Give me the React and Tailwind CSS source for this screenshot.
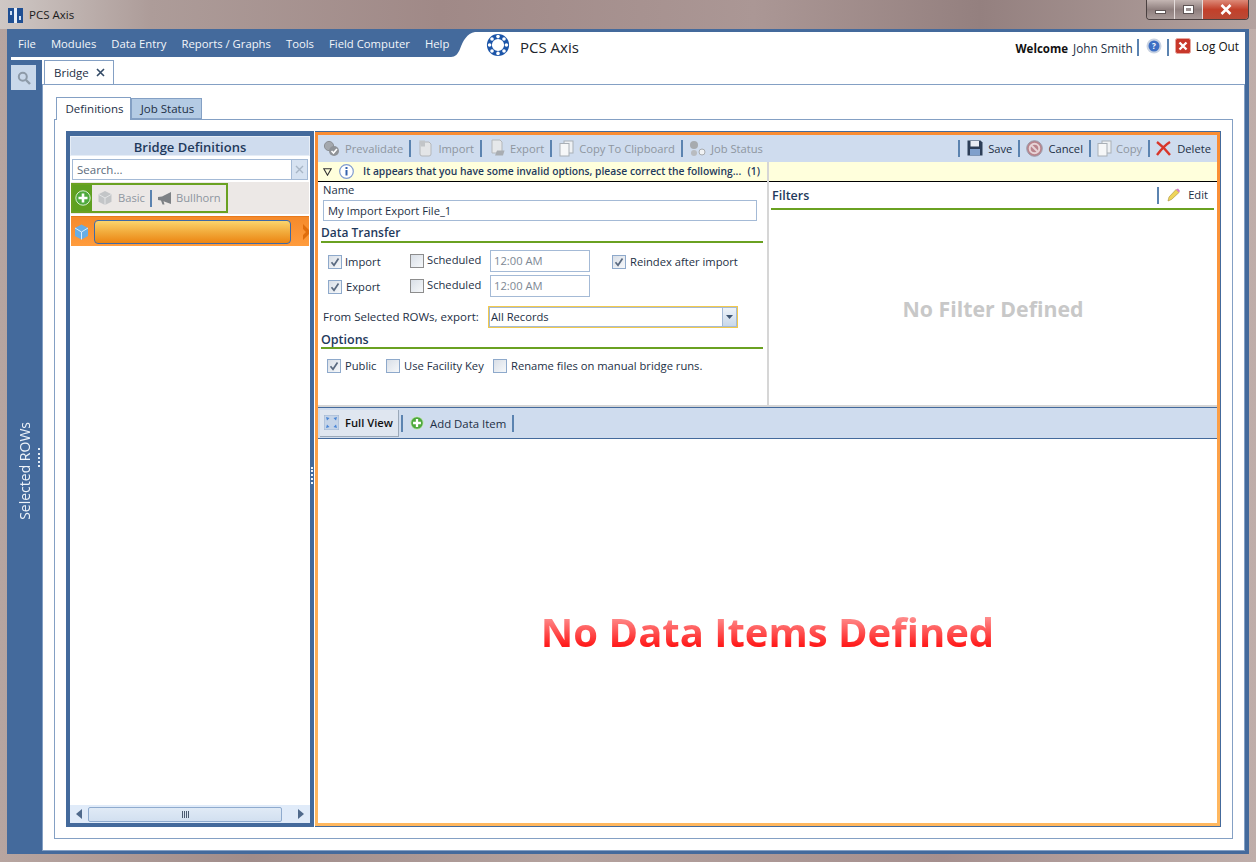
import React from 'react';

const Sep = ({ className = '' }) => <span className={`inline-block w-[2px] h-[17px] bg-[#5b83b0] ${className}`} />;

const CheckBox = ({ checked, gray, className = '' }) => (
  <span className={`inline-flex items-center justify-center w-[14px] h-[14px] shrink-0 border ${gray ? 'border-[#8d8d8d]' : 'border-[#8ea9cb]'} bg-[linear-gradient(135deg,#d9dfe7,#f6f8fa)] ${className}`}>
    {checked && (
      <svg width="10" height="10" viewBox="0 0 10 10">
        <path d="M1.5 5.2 L4 8.3 L8.5 1.5" fill="none" stroke="#5a6a80" strokeWidth="1.7" />
      </svg>
    )}
  </span>
);

const GreenPlus = ({ size = 14 }) => (
  <svg width={size} height={size} viewBox="0 0 16 16">
    <circle cx="8" cy="8" r="7.2" fill="#4eaa3c" stroke="#d6edd0" strokeWidth="1" />
    <path d="M8 3.5v9M3.5 8h9" stroke="#fff" strokeWidth="2.6" />
  </svg>
);

const CopyIcon = () => (
  <svg width="15" height="17" viewBox="0 0 15 17">
    <rect x="5" y="1" width="9" height="12" fill="#eef1f4" stroke="#a9afb6" />
    <rect x="1" y="3.5" width="9" height="12.5" fill="#f6f7f8" stroke="#a9afb6" />
  </svg>
);

const PrevalidateIcon = () => (
  <svg width="17" height="17" viewBox="0 0 17 17">
    <circle cx="6" cy="6" r="4.6" fill="#a4a8ad" stroke="#8b8f94" />
    <circle cx="11" cy="11" r="5" fill="#8f9398" />
    <path d="M8.5 11l2 2 3.4-4" fill="none" stroke="#fff" strokeWidth="1.6" />
  </svg>
);

const ImportIcon = () => (
  <svg width="16" height="18" viewBox="0 0 16 18">
    <path d="M3 3h9l2 2v10a2 2 0 0 1-2 2H5a2 2 0 0 1-2-2z" fill="#e3e5e7" stroke="#b4b7ba" />
    <path d="M2 1.5h6v6H4z" fill="#c2c5c8" />
  </svg>
);

const ExportIcon = () => (
  <svg width="16" height="18" viewBox="0 0 16 18">
    <path d="M3 1h8l2 2v11H3z" fill="#e6e8ea" stroke="#b4b7ba" />
    <path d="M6 16.5l2-5h7.5l-1.5 5z" fill="#a9adb2" />
  </svg>
);

const JobStatusIcon = () => (
  <svg width="17" height="17" viewBox="0 0 17 17">
    <circle cx="5" cy="5" r="4" fill="#a7abaf" />
    <circle cx="5" cy="13" r="3" fill="#b9bcc0" />
    <circle cx="13" cy="12" r="3" fill="#f0f2f4" stroke="#a7abaf" />
  </svg>
);

const Tool = ({ icon, label, disabled, gap = 'gap-[5px]', className = '' }) => (
  <span className={`flex items-center ${gap} ${disabled ? 'text-[#8e969f]' : 'text-[#1d2f45]'} ${className}`}>
    {icon}
    <span className="mt-[2px]">{label}</span>
  </span>
);

const GreenTitle = ({ children, className = '' }) => (
  <div className={`border-b-2 border-[#6aa121] font-semibold text-[#1f3a5c] ${className}`}>{children}</div>
);

export default function App() {
  return (
    <div className="w-[1256px] h-[862px] overflow-hidden flex flex-col font-['Open_Sans',sans-serif] text-[11px] text-[#1d2f45] bg-[linear-gradient(90deg,#b7a5a0,#a08c8a_20%,#b4a29e_45%,#a58f8e_75%,#bfaeaa)]">
      {/* title bar */}
      <div className="h-[29px] shrink-0 flex items-start pl-[8px] relative bg-[linear-gradient(90deg,#cfc8c5,#ad9c99_12%,#a08987_35%,#ab9795_60%,#94807f_78%,#b3a29f)]">
        <svg width="15" height="15" viewBox="0 0 15 15" className="mt-[8px]">
          <rect width="15" height="15" fill="#1f4f93" />
          <rect x="6" y="0" width="3" height="15" fill="#e8eef7" />
          <rect x="2" y="3" width="2" height="4" fill="#cfe0f5" />
          <rect x="11" y="8" width="2" height="4" fill="#cfe0f5" />
        </svg>
        <span className="ml-[6px] mt-[7px] text-[11.5px] leading-[16px] text-[#1b1b1b]">PCS Axis</span>
        <div className="ml-auto mr-[7px] flex h-[20px] border border-t-0 border-[#4a4040] rounded-b-[4px] overflow-hidden w-[103px]">
          <div className="w-[28px] flex items-center justify-center border-r border-[#e4dcdb] bg-[linear-gradient(#c4b6b3,#8f7f7e_50%,#a89a98)]">
            <span className="w-[11px] h-[4px] mt-[5px] bg-white border border-[#5f5555]" />
          </div>
          <div className="w-[27px] flex items-center justify-center bg-[linear-gradient(#c4b6b3,#8f7f7e_50%,#a89a98)]">
            <span className="w-[11px] h-[9px] bg-white border border-[#5f5555] flex items-center justify-center">
              <span className="w-[5px] h-[3px] bg-[#9a9090]" />
            </span>
          </div>
          <div className="flex-1 flex items-center justify-center border-l border-[#e4dcdb] bg-[linear-gradient(#dd8a78,#c2402a_50%,#b94a36)]">
            <svg width="12" height="11" viewBox="0 0 12 11">
              <path d="M1.5 1l9 9M10.5 1l-9 9" stroke="#fff" strokeWidth="2.6" />
            </svg>
          </div>
        </div>
      </div>

      {/* app window */}
      <div className="ml-[7px] w-[1242px] h-[825px] bg-[#446a9c] pt-[3px] pr-[4px] pb-[3px] flex flex-col">
        {/* menu bar */}
        <div className="h-[25px] shrink-0 flex bg-white">
          <div className="w-[444px] bg-[#446a9c] flex items-start pl-[11px] pt-[3px] gap-[15px] text-[11.3px] leading-[17px] text-[#f3f6fa]">
            <span>File</span>
            <span>Modules</span>
            <span>Data Entry</span>
            <span>Reports / Graphs</span>
            <span>Tools</span>
            <span>Field Computer</span>
            <span>Help</span>
          </div>
          <svg width="30" height="25" viewBox="0 0 30 25" className="shrink-0">
            <path d="M0 0H24C16 1 12 9 9 17C7 22 4 25 0 25Z" fill="#446a9c" />
          </svg>
          <svg width="24" height="24" viewBox="0 0 24 24" className="ml-[5px] mt-[1px] shrink-0">
            <circle cx="12" cy="12" r="8.6" fill="none" stroke="#1c55a8" strokeWidth="5" />
            <g fill="#fff">
              <circle cx="12" cy="3.6" r="1.8" />
              <circle cx="12" cy="20.4" r="1.8" />
              <circle cx="3.6" cy="12" r="1.8" />
              <circle cx="20.4" cy="12" r="1.8" />
              <circle cx="6" cy="6" r="1.8" />
              <circle cx="18" cy="6" r="1.8" />
              <circle cx="6" cy="18" r="1.8" />
              <circle cx="18" cy="18" r="1.8" />
            </g>
          </svg>
          <span className="ml-[10px] mt-[5px] text-[15px] leading-[20px] text-[#20242a]">PCS Axis</span>
          <div className="ml-auto flex items-start pr-[6px] pt-[6px] text-[11.8px] leading-[17px] text-[#111]">
            <span className="font-bold text-[11.5px] mt-[2px]">Welcome</span>
            <span className="ml-[5px] mt-[2px] text-[#1d2f45]">John Smith</span>
            <Sep className="ml-[4px] mt-[1px]" />
            <svg width="16" height="16" viewBox="0 0 16 16" className="ml-[7px]">
              <circle cx="8" cy="8" r="7.5" fill="#c9d3e2" />
              <circle cx="8" cy="8" r="5.5" fill="#3d6fc4" />
              <text x="8" y="11" textAnchor="middle" fontSize="8" fontWeight="700" fill="#fff" fontFamily="Open Sans">?</text>
            </svg>
            <Sep className="ml-[5px] mt-[1px]" />
            <svg width="16" height="16" viewBox="0 0 16 16" className="ml-[6px]">
              <rect x="0.5" y="0.5" width="15" height="15" rx="2" fill="#c8372a" stroke="#e7a79f" />
              <path d="M4.5 4.5l7 7M11.5 4.5l-7 7" stroke="#fff" strokeWidth="2.4" />
            </svg>
            <span className="ml-[5px]">Log Out</span>
          </div>
        </div>

        <div className="h-[3px] shrink-0 ml-[4px] bg-white" />

        <div className="flex-1 flex min-h-0">
          {/* selected rows sidebar */}
          <div className="w-[35px] shrink-0 flex flex-col relative">
            <button className="ml-[4px] mt-[5px] w-[25px] h-[25px] bg-[#c9d8ea] flex items-center justify-center">
              <svg width="14" height="14" viewBox="0 0 14 14">
                <circle cx="5.8" cy="5.8" r="4" fill="none" stroke="#8d9aa8" strokeWidth="2" />
                <path d="M9 9l4 4" stroke="#8d9aa8" strokeWidth="2.4" />
              </svg>
            </button>
            <div className="mt-[332px] ml-[11px] [writing-mode:vertical-rl] rotate-180 text-[14px] leading-[14px] text-[#eef3f9]">Selected ROWs</div>
            <div className="absolute left-[31px] top-[388px] h-[19px] w-[2px] border-l-2 border-dotted border-[#e5edf6]" />
          </div>

          {/* content */}
          <div className="flex-1 flex flex-col min-w-0 bg-white">
            <div className="h-[24px] shrink-0 flex pl-[2px]">
              <div className="w-[70px] h-[24px] -mb-px z-10 border border-b-0 border-[#84a0c4] bg-white flex items-center pl-[9px] gap-[7px] text-[11.5px]">
                <span>Bridge</span>
                <svg width="9" height="9" viewBox="0 0 9 9">
                  <path d="M1 1l7 7M8 1l-7 7" stroke="#334a66" strokeWidth="1.6" />
                </svg>
              </div>
            </div>
            <div className="flex-1 min-h-0 border border-[#84a0c4] flex flex-col pt-[11px] pl-[11px] pr-[11px] pb-[11px]">
              <div className="h-[23px] shrink-0 flex items-end pl-[2px] text-[11.5px]">
                <div className="w-[75px] h-[23px] -mb-px z-10 border border-b-0 border-[#84a0c4] bg-white flex items-center justify-center pl-[2px]">Definitions</div>
                <div className="w-[71px] h-[21px] border border-[#84a0c4] bg-[#b4cbe4] flex items-center justify-center pl-[2px]">Job Status</div>
              </div>
              <div className="flex-1 min-h-0 border border-[#84a0c4] flex pt-[11px] pl-[11px] pr-[11px] pb-[11px] gap-[1px]">
                {/* definitions list */}
                <div className="w-[248px] shrink-0 bg-[#446a9c] pt-[5px] px-[4px] pb-[4px] relative">
                  <div className="h-full bg-white flex flex-col">
                    <div className="h-[20px] shrink-0 pt-[3px] bg-[#cfdcee] border border-[#e6edf6] flex items-center justify-center font-semibold text-[13px] text-[#1f3a5c]">Bridge Definitions</div>
                    <div className="mt-[3px] mx-[2px] h-[21px] shrink-0 border border-[#a4bad6] flex">
                      <span className="flex-1 pl-[4px] leading-[19px] text-[#5a6a7a] text-[11.5px]">Search...</span>
                      <span className="w-[16px] bg-[#d6e2f1] border-l border-[#a4bad6] flex items-center justify-center">
                        <svg width="9" height="9" viewBox="0 0 9 9">
                          <path d="M1 1l7 7M8 1l-7 7" stroke="#a8b6c6" strokeWidth="1.4" />
                        </svg>
                      </span>
                    </div>
                    <div className="mt-[2px] mx-[1px] h-[32px] shrink-0 bg-[#ece8e6] py-[1px]">
                      <div className="w-[157px] h-[30px] border-2 border-[#6aa121] flex items-center text-[11.2px] text-[#8e969f]">
                        <span className="w-[19px] h-full bg-[#5fa021] flex items-center justify-center">
                          <GreenPlus size={16} />
                        </span>
                        <svg width="16" height="16" viewBox="0 0 16 16" className="ml-[5px]">
                          <path d="M8 1l6.5 3.3v7.4L8 15l-6.5-3.3V4.300z" fill="#c3c5c7" />
                          <path d="M8 8l6.500-3.700M8 8v7M8 8L1.500 4.300" stroke="#e4e5e6" fill="none" />
                        </svg>
                        <span className="ml-[5px]">Basic</span>
                        <Sep className="ml-[5px]" />
                        <svg width="16" height="15" viewBox="0 0 16 15" className="ml-[5px]">
                          <path d="M1 6v3l3 .6 1.500 4h2l-1-3.400L14 13V1L5 5.500z" fill="#7d8185" />
                        </svg>
                        <span className="ml-[3px]">Bullhorn</span>
                      </div>
                    </div>
                    <div className="mt-[2px] mx-[1px] h-[30px] shrink-0 bg-[linear-gradient(#f58a2b,#ff9c3d)] border-t border-[#e87a1c] flex items-center relative overflow-hidden">
                      <svg width="15" height="16" viewBox="0 0 15 16" className="ml-[3px] shrink-0">
                        <path d="M7.500 0.500l6.500 3.500v8l-6.500 3.500L1 12V4z" fill="#68aee6" />
                        <path d="M7.500 8l6.500-4M7.500 8v7.500M7.500 8L1 4" stroke="#d8eeff" fill="none" />
                      </svg>
                      <div className="ml-[5px] w-[197px] h-[24px] shrink-0 rounded-[4px] border border-[#3d6aa8] bg-[linear-gradient(#fbd46c,#f2ab3c_50%,#ec8512)]" />
                      <svg width="8" height="16" viewBox="0 0 8 16" className="ml-[12px] shrink-0">
                        <path d="M0 0l8 8-8 8V11l3-3-3-3z" fill="#e06d0c" />
                      </svg>
                    </div>
                    <div className="flex-1" />
                    <div className="h-[18px] shrink-0 bg-[#e0ebf9] flex items-center px-[1px]">
                      <svg width="16" height="12" viewBox="0 0 16 12">
                        <path d="M11 1v10L5 6z" fill="#506a8c" />
                      </svg>
                      <div className="w-[194px] h-[15px] ml-[1px] rounded-[2px] border border-[#8fabce] bg-[linear-gradient(#e0eaf6,#d2e0f0)] flex items-center justify-center gap-[1px]">
                        <span className="w-[1px] h-[7px] bg-[#4a5a70]" />
                        <span className="w-[1px] h-[7px] bg-[#4a5a70]" />
                        <span className="w-[1px] h-[7px] bg-[#4a5a70]" />
                        <span className="w-[1px] h-[7px] bg-[#4a5a70]" />
                      </div>
                      <svg width="16" height="12" viewBox="0 0 16 12" className="ml-[11px]">
                        <path d="M5 1v10l6-5z" fill="#506a8c" />
                      </svg>
                    </div>
                  </div>
                  <div className="absolute right-[1px] top-[336px] h-[17px] w-[2px] border-l-2 border-dotted border-[#f0f5fa]" />
                </div>

                {/* definition detail */}
                <div className="flex-1 min-w-0 border-t border-r border-b border-[#446a9c]">
                  <div className="h-full bg-[linear-gradient(#fa8c32,#ffb860)] p-[3px] flex">
                    <div className="flex-1 min-w-0 bg-white flex flex-col">
                      <div className="h-[27px] shrink-0 bg-[#cfdcee] flex items-center pl-[5px] pr-[6px] text-[11.2px]">
                        <Tool disabled icon={<PrevalidateIcon />} label="Prevalidate" />
                        <Sep className="ml-[6px] mr-[6px]" />
                        <Tool disabled icon={<ImportIcon />} label="Import" />
                        <Sep className="ml-[6px] mr-[7px]" />
                        <Tool disabled icon={<ExportIcon />} label="Export" />
                        <Sep className="ml-[6px] mr-[7px]" />
                        <Tool disabled icon={<CopyIcon />} label="Copy To Clipboard" />
                        <Sep className="ml-[6px] mr-[6px]" />
                        <Tool disabled icon={<JobStatusIcon />} label="Job Status" />
                        <Sep className="ml-auto mr-[7px]" />
                        <Tool
                          icon={
                            <svg width="16" height="16" viewBox="0 0 16 16">
                              <path d="M0.500 0.500h13l2 2v13H0.500z" fill="#2d3e57" />
                              <rect x="3.500" y="1" width="8.500" height="5.500" fill="#e8edf4" />
                              <rect x="3" y="9" width="10" height="6.500" fill="#7fa0cc" />
                            </svg>
                          }
                          label="Save"
                        />
                        <Sep className="ml-[6px] mr-[6px]" />
                        <Tool
                          icon={
                            <svg width="17" height="17" viewBox="0 0 17 17">
                              <circle cx="8.500" cy="8.500" r="7.800" fill="#b9838c" stroke="#9a9aa8" />
                              <circle cx="8.500" cy="8.500" r="4.800" fill="none" stroke="#e7d3d6" strokeWidth="2" />
                              <path d="M5 5l7 7" stroke="#e7d3d6" strokeWidth="2" />
                            </svg>
                          }
                          label="Cancel"
                        />
                        <Sep className="ml-[6px] mr-[6px]" />
                        <Tool disabled gap="gap-[4px]" icon={<CopyIcon />} label="Copy" />
                        <Sep className="ml-[6px] mr-[6px]" />
                        <Tool
                          gap="gap-[6px]"
                          icon={
                            <svg width="15" height="15" viewBox="0 0 15 15">
                              <path d="M1 1c4 3 9 8 13 13M14 1C9 4 4 10 1 14" stroke="#d8362a" strokeWidth="2.400" fill="none" />
                            </svg>
                          }
                          label="Delete"
                        />
                      </div>

                      <div className="h-[243px] shrink-0 flex">
                        {/* form */}
                        <div className="w-[449px] shrink-0 flex flex-col">
                          <div className="h-[20px] shrink-0 bg-[#ffffdc] border-b border-black flex items-center pl-[5px] text-[10.3px] font-semibold text-[#1f3a5c]">
                            <svg width="9" height="8" viewBox="0 0 9 8">
                              <path d="M0.800 0.800h7.400L4.500 7.200z" fill="none" stroke="#333" strokeWidth="1.100" />
                            </svg>
                            <svg width="15" height="15" viewBox="0 0 15 15" className="ml-[7px]">
                              <circle cx="7.500" cy="7.500" r="6.800" fill="#fff" stroke="#7f9bd0" strokeWidth="1.200" />
                              <rect x="6.500" y="6" width="2" height="5.500" fill="#3462ad" />
                              <rect x="6.500" y="3" width="2" height="2" fill="#3462ad" />
                            </svg>
                            <span className="ml-[9px] whitespace-nowrap">It appears that you have some invalid options, please correct the following...</span>
                            <span className="ml-auto mr-[7px]">(1)</span>
                          </div>
                          <div className="flex-1 pl-[3px] pr-[4px] text-[11.2px]">
                            <div className="pl-[2px] leading-[15px]">Name</div>
                            <div className="ml-[2px] mt-[3px] w-[434px] h-[21px] border border-[#a4bad6] pl-[4px] leading-[19px]">My Import Export File_1</div>
                            <GreenTitle className="text-[12px] leading-[23px] h-[22px]">Data Transfer</GreenTitle>

                            <div className="mt-[7px] flex flex-col gap-[3px]">
                              <div className="h-[22px] flex items-center">
                                <CheckBox checked className="ml-[7px] mt-[2px]" />
                                <span className="ml-[3px] w-[65px] mt-[3px]">Import</span>
                                <CheckBox gray className="-mt-[1px]" />
                                <span className="ml-[3px] w-[63px] -mt-[1px]">Scheduled</span>
                                <div className="w-[100px] h-[22px] border border-[#a4bad6] pl-[3px] leading-[20px] text-[#7d8894]">12:00 AM</div>
                                <CheckBox checked className="ml-[22px] mt-[2px]" />
                                <span className="ml-[4px] mt-[3px]">Reindex after import</span>
                              </div>
                              <div className="h-[22px] flex items-center">
                                <CheckBox checked className="ml-[7px] mt-[2px]" />
                                <span className="ml-[4px] w-[64px] mt-[2px]">Export</span>
                                <CheckBox gray className="-mt-[1px]" />
                                <span className="ml-[3px] w-[63px] -mt-[1px]">Scheduled</span>
                                <div className="w-[100px] h-[22px] border border-[#a4bad6] pl-[3px] leading-[20px] text-[#7d8894]">12:00 AM</div>
                              </div>
                            </div>

                            <div className="mt-[9px] h-[22px] flex items-center pl-[2px]">
                              <span className="w-[165px] whitespace-nowrap text-[11.5px]">From Selected ROWs, export:</span>
                              <div className="w-[250px] h-[22px] border border-[#f2c94c] flex">
                                <div className="flex-1 border border-[#a4bad6] border-r-0 pl-[1px] leading-[18px]">All Records</div>
                                <div className="w-[15px] border border-[#a4bad6] bg-[linear-gradient(#eef3f9,#c9d8ea)] flex items-center justify-center">
                                  <svg width="7" height="4" viewBox="0 0 7 4">
                                    <path d="M0 0h7L3.500 4z" fill="#3f5673" />
                                  </svg>
                                </div>
                              </div>
                            </div>

                            <GreenTitle className="text-[12.5px] leading-[23px] h-[21px]">Options</GreenTitle>
                            <div className="mt-[10px] h-[14px] flex items-center">
                              <CheckBox checked className="ml-[6px]" />
                              <span className="ml-[4px] w-[41px]">Public</span>
                              <CheckBox />
                              <span className="ml-[4px] w-[89px]">Use Facility Key</span>
                              <CheckBox />
                              <span className="ml-[4px] whitespace-nowrap">Rename files on manual bridge runs.</span>
                            </div>
                          </div>
                        </div>
                        <div className="w-[2px] shrink-0 bg-[#d6d6d6]" />
                        {/* filters */}
                        <div className="flex-1 min-w-0 flex flex-col">
                          <div className="h-[20px] shrink-0 bg-[#ffffdc] border-b border-black" />
                          <div className="mx-[2px] mr-[3px] h-[28px] shrink-0 border-b-2 border-[#6aa121] flex items-center pl-[1px] pr-[6px] text-[11.2px]">
                            <span className="font-semibold text-[12.5px] text-[#1f3a5c] mt-[2px]">Filters</span>
                            <Sep className="ml-auto" />
                            <svg width="14" height="14" viewBox="0 0 14 14" className="ml-[8px]">
                              <path d="M1 13l1-4 7-7.500 3 3-7.500 7z" fill="#efd45a" stroke="#a88f3a" strokeWidth="0.600" />
                              <path d="M9 1.500l3 3 1-1.500-2-2.500z" fill="#d57bc4" />
                            </svg>
                            <span className="ml-[7px]">Edit</span>
                          </div>
                          <div className="flex-1 pt-[2px] flex items-center justify-center font-bold text-[21.3px] text-[#c8c8c8]">No Filter Defined</div>
                        </div>
                      </div>

                      <div className="h-[2px] shrink-0 bg-[#d6d6d6]" />
                      <div className="h-[32px] shrink-0 bg-[#cfdcee] border-y border-[#446a9c] flex items-center pl-[2px] text-[11.2px]">
                        <div className="w-[79px] h-[27px] bg-[#dfe6f0] border-r border-b border-[#9aa8b8] flex items-center pl-[4px] gap-[6px] font-semibold text-[#111]">
                          <svg width="15" height="15" viewBox="0 0 15 15">
                            <rect width="15" height="15" fill="#c5d4e8" stroke="#9fb4d0" />
                            <path d="M2 2l3.500 1-2.500 2.500zM13 2l-1 3.500L9.500 3zM2 13l1-3.500L5.500 12zM13 13l-3.500-1 2.500-2.500z" fill="#4a86d6" />
                          </svg>
                          <span className="mt-[1px]">Full View</span>
                        </div>
                        <Sep className="ml-[2px] mr-[7px]" />
                        <GreenPlus size={14} />
                        <span className="ml-[6px] mt-[2px] text-[11.4px]">Add Data Item</span>
                        <Sep className="ml-[6px]" />
                      </div>
                      <div className="flex-1 flex items-center justify-center pt-[2px]">
                        <span className="font-bold text-[40px] leading-[44px] text-transparent bg-clip-text bg-[linear-gradient(#ff8f8f_15%,#ff1c1c_80%)]">No Data Items Defined</span>
                      </div>
                    </div>
                  </div>
                </div>
              </div>
            </div>
          </div>
        </div>
      </div>
    </div>
  );
}
